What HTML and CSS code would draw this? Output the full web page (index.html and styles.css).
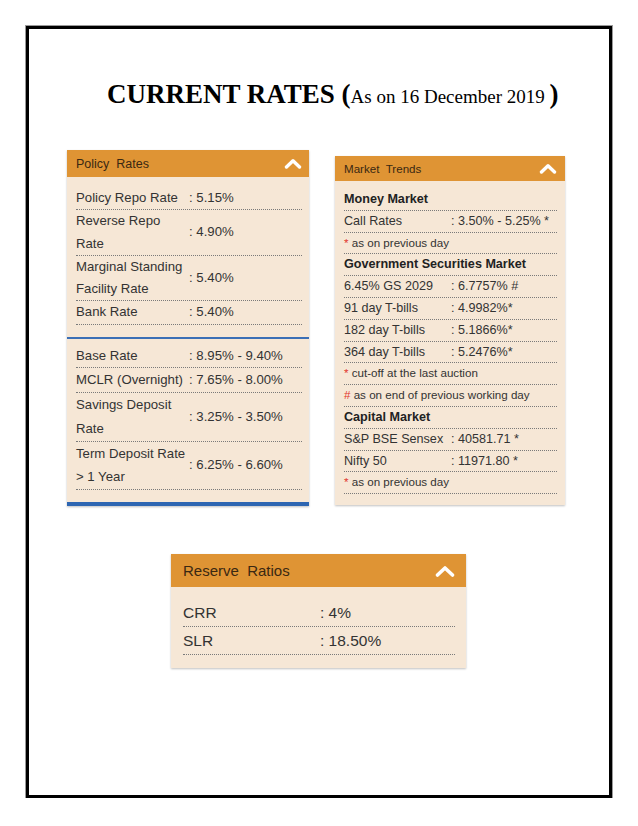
FILE: index.html
```html
<!DOCTYPE html>
<html>
<head>
<meta charset="utf-8">
<title>Current Rates</title>
<link rel="stylesheet" href="styles.css">
</head>
<body>
<div class="page">
  <h1 class="title"><span class="big">CURRENT RATES (</span><span class="small">As on 16 December 2019 </span><span class="big">)</span></h1>

  <div class="panels">
    <section class="panel policy">
      <div class="panel-head">
        <span>Policy&nbsp; Rates</span>
        <svg class="chev" width="18" height="11" viewBox="0 0 18 11"><polyline points="2.5,9 9,2.8 15.5,9" fill="none" stroke="#fff" stroke-width="3.4" stroke-linecap="round" stroke-linejoin="round"/></svg>
      </div>
      <div class="panel-body">
        <div class="rows upper">
          <div class="row"><div class="lbl">Policy Repo Rate</div><div class="val">: 5.15%</div></div>
          <div class="row"><div class="lbl">Reverse Repo<br>Rate</div><div class="val">: 4.90%</div></div>
          <div class="row"><div class="lbl">Marginal Standing<br>Facility Rate</div><div class="val">: 5.40%</div></div>
          <div class="row"><div class="lbl">Bank Rate</div><div class="val">: 5.40%</div></div>
        </div>
        <div class="sep"></div>
        <div class="rows lower">
          <div class="row"><div class="lbl">Base Rate</div><div class="val">: 8.95% - 9.40%</div></div>
          <div class="row"><div class="lbl">MCLR (Overnight)</div><div class="val">: 7.65% - 8.00%</div></div>
          <div class="row"><div class="lbl">Savings Deposit<br>Rate</div><div class="val">: 3.25% - 3.50%</div></div>
          <div class="row"><div class="lbl">Term Deposit Rate<br>&gt; 1 Year</div><div class="val">: 6.25% - 6.60%</div></div>
        </div>
      </div>
      <div class="blue-bar"></div>
    </section>

    <section class="panel market">
      <div class="panel-head">
        <span>Market&nbsp; Trends</span>
        <svg class="chev" width="18" height="11" viewBox="0 0 18 11"><polyline points="2.5,9 9,2.8 15.5,9" fill="none" stroke="#fff" stroke-width="3.4" stroke-linecap="round" stroke-linejoin="round"/></svg>
      </div>
      <div class="panel-body">
        <div class="row head-row">Money Market</div>
        <div class="row"><div class="lbl">Call Rates</div><div class="val">: 3.50% - 5.25% *</div></div>
        <div class="row note"><span class="red">*</span> as on previous day</div>
        <div class="row head-row">Government Securities Market</div>
        <div class="row"><div class="lbl">6.45% GS 2029</div><div class="val">: 6.7757% #</div></div>
        <div class="row"><div class="lbl">91 day T-bills</div><div class="val">: 4.9982%*</div></div>
        <div class="row"><div class="lbl">182 day T-bills</div><div class="val">: 5.1866%*</div></div>
        <div class="row"><div class="lbl">364 day T-bills</div><div class="val">: 5.2476%*</div></div>
        <div class="row note"><span class="red">*</span> cut-off at the last auction</div>
        <div class="row note"><span class="red">#</span> as on end of previous working day</div>
        <div class="row head-row">Capital Market</div>
        <div class="row"><div class="lbl">S&amp;P BSE Sensex</div><div class="val">: 40581.71 *</div></div>
        <div class="row"><div class="lbl">Nifty 50</div><div class="val">: 11971.80 *</div></div>
        <div class="row note"><span class="red">*</span> as on previous day</div>
      </div>
    </section>
  </div>

  <section class="panel reserve">
    <div class="panel-head">
      <span>Reserve&nbsp; Ratios</span>
      <svg class="chev" width="20" height="12" viewBox="0 0 20 12"><polyline points="2.5,10 10,3 17.5,10" fill="none" stroke="#fff" stroke-width="3.6" stroke-linecap="round" stroke-linejoin="round"/></svg>
    </div>
    <div class="panel-body">
      <div class="row"><div class="lbl">CRR</div><div class="val">: 4%</div></div>
      <div class="row"><div class="lbl">SLR</div><div class="val">: 18.50%</div></div>
    </div>
  </section>
</div>
</body>
</html>
```

FILE: styles.css
```css
* { box-sizing: border-box; }

body {
  margin: 0;
  background: #fff;
  font-family: "Liberation Sans", Arial, sans-serif;
  color: #333;
}

.page {
  margin: 26px 0 0 26px;
  width: 586px;
  height: 772px;
  border: 3px solid #000;
  box-shadow: 0 0 0 1px #9a9a9a;
}

.title {
  margin: 45px 0 0 0;
  padding-left: 78px;
  font-family: "Liberation Serif", "Times New Roman", serif;
  line-height: 36px;
  color: #000;
  white-space: nowrap;
}
.title .big { font-size: 27px; font-weight: bold; }
.title .small { font-size: 19px; font-weight: normal; }

.panels {
  display: flex;
  align-items: flex-start;
  margin-top: 35px;
  padding-left: 38px;
}

.panel {
  background: #f6e7d6;
  box-shadow: 0 1px 2px rgba(0,0,0,0.25);
}

.panel-head {
  display: flex;
  align-items: center;
  justify-content: space-between;
  background: #df9434;
  color: #3a2812;
}

/* Policy */
.policy { width: 242px; }
.policy .panel-head {
  height: 27px;
  padding: 0 7px 0 9px;
  font-size: 12.5px;
}
.policy .panel-body { padding: 10px 7px 12px 9px; }
.policy .row {
  display: flex;
  align-items: center;
  border-bottom: 1px dotted #7a7a7a;
  font-size: 13.2px;
}
.policy .lbl { width: 113px; flex: none; white-space: nowrap; }
.policy .upper .row { line-height: 22.3px; }
.policy .lower .row { line-height: 23.7px; }
.policy .sep {
  height: 2px;
  background: #3b6fb6;
  margin: 12px -7px 5px -9px;
}
.blue-bar { height: 4px; background: #2e66b2; }

/* Market */
.market { width: 230px; margin-left: 26px; margin-top: 6px; }
.market .panel-head {
  height: 25px;
  padding: 0 8px 0 9px;
  font-size: 11.6px;
}
.market .panel-body { padding: 8px 8px 11px 9px; }
.market .row {
  display: flex;
  align-items: center;
  border-bottom: 1px dotted #7a7a7a;
  line-height: 20.8px;
  font-size: 12.6px;
}
.market .row.head-row,
.market .row.note { display: block; white-space: nowrap; }
.market .lbl { width: 107px; flex: none; white-space: nowrap; }
.market .head-row { font-weight: bold; color: #222; }
.market .note { font-size: 11.6px; }
.red { color: #e2352b; }

/* Reserve */
.reserve {
  width: 295px;
  margin: 48px 0 0 142px;
}
.reserve .panel-head {
  height: 33px;
  padding: 0 11px 0 12px;
  font-size: 15px;
}
.reserve .panel-body { padding: 12px 11px 13px 12px; }
.reserve .row {
  display: flex;
  align-items: center;
  border-bottom: 1px dotted #7a7a7a;
  line-height: 27px;
  font-size: 15.5px;
}
.reserve .lbl { width: 137px; flex: none; }
```
